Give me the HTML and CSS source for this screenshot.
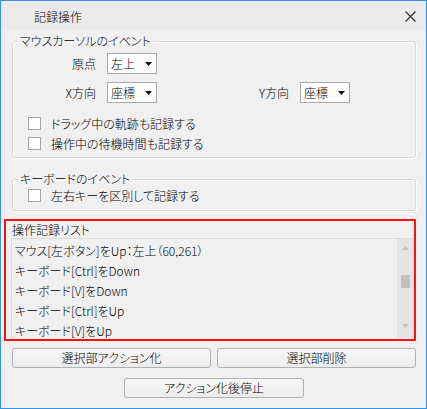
FILE: index.html
```html
<!DOCTYPE html>
<html>
<head>
    <meta charset="UTF-8">
    <title>記録操作</title>
    <link rel="stylesheet" href="styles.css">
</head>
<body>
    <div class="window">
        <div class="titlebar">
            <span class="title">記録操作</span>
            <svg class="close" width="11" height="11" viewBox="0 0 11 11">
                <path d="M0.5 0.5 L10.5 10.5 M10.5 0.5 L0.5 10.5" stroke="#333" stroke-width="1.2" fill="none"/>
            </svg>
        </div>

        <fieldset class="group group-mouse">
            <legend>マウスカーソルのイベント</legend>
            <div class="row row-origin">
                <span class="label">原点</span>
                <div class="combo">
                    <span class="value">左上</span>
                    <svg class="arrow" width="7" height="4" viewBox="0 0 7 4"><polygon points="0,0 7,0 3.5,4" fill="#111"/></svg>
                </div>
            </div>
            <div class="row row-dir">
                <span class="label">X方向</span>
                <div class="combo">
                    <span class="value">座標</span>
                    <svg class="arrow" width="7" height="4" viewBox="0 0 7 4"><polygon points="0,0 7,0 3.5,4" fill="#111"/></svg>
                </div>
                <span class="label label-y">Y方向</span>
                <div class="combo">
                    <span class="value">座標</span>
                    <svg class="arrow" width="7" height="4" viewBox="0 0 7 4"><polygon points="0,0 7,0 3.5,4" fill="#111"/></svg>
                </div>
            </div>
            <div class="check check-first"><span class="box"></span>ドラッグ中の軌跡も記録する</div>
            <div class="check"><span class="box"></span>操作中の待機時間も記録する</div>
        </fieldset>

        <fieldset class="group group-key">
            <legend>キーボードのイベント</legend>
            <div class="check check-key"><span class="box"></span>左右キーを区別して記録する</div>
        </fieldset>

        <div class="record-area">
            <div class="record-label">操作記録リスト</div>
            <div class="listbox">
                <div class="items">
                    <div class="item">マウス[左ボタン]をUp：左上（60,261）</div>
                    <div class="item">キーボード[Ctrl]をDown</div>
                    <div class="item">キーボード[V]をDown</div>
                    <div class="item">キーボード[Ctrl]をUp</div>
                    <div class="item">キーボード[V]をUp</div>
                </div>
                <div class="scrollbar">
                    <svg class="sb-arrow" width="7" height="4" viewBox="0 0 7 4"><polygon points="3.5,0 7,4 0,4" fill="#c2c2c2"/></svg>
                    <div class="thumb"></div>
                    <svg class="sb-arrow sb-down" width="7" height="4" viewBox="0 0 7 4"><polygon points="0,0 7,0 3.5,4" fill="#c2c2c2"/></svg>
                </div>
            </div>
        </div>

        <div class="button-row">
            <button class="btn btn-half">選択部アクション化</button>
            <button class="btn btn-half">選択部削除</button>
        </div>
        <div class="button-row button-row-center">
            <button class="btn btn-stop">アクション化後停止</button>
        </div>
    </div>
</body>
</html>
```

FILE: styles.css
```css
body {
    margin: 0;
    background-color: #f0f0f0;
    font-family: "Noto Sans CJK JP", "Noto Sans", sans-serif;
    font-size: 12px;
    font-weight: 300;
    color: #000;
    font-feature-settings: "palt";
}
.window {
    width: 427px;
    height: 409px;
    box-sizing: border-box;
    border: 1px solid #3592e6;
    background-color: #f0f0f0;
    display: flex;
    flex-direction: column;
}
.titlebar {
    height: 30px;
    background-color: #ebebeb;
    display: flex;
    align-items: center;
    padding-left: 33px;
    flex-shrink: 0;
}
.title {
    font-size: 12px;
    line-height: 16px;
    padding-top: 1px;
}
.close {
    margin-left: auto;
    margin-right: 10px;
}
.group {
    margin: 3px 0 0 11px;
    padding: 0 0 4px 0;
    width: 404px;
    box-sizing: border-box;
    border: 1px solid #d8d8d8;
    border-radius: 3px;
    box-shadow: inset 1px 1px 0 #fff, 1px 1px 0 #fff;
    min-width: 0;
}
.group legend {
    margin-left: 5px;
    padding: 0 2px;
    line-height: 14px;
}
.group-key {
    margin-top: 14px;
    padding-bottom: 6px;
}
.row {
    display: flex;
    align-items: center;
    height: 21px;
    margin-top: 8px;
}
.row-origin {
    margin-top: 5px;
}
.label {
    width: 48px;
    margin-left: 35px;
    text-align: right;
    margin-right: 11px;
}
.label-y {
    margin-left: 84px;
}
.combo {
    width: 50px;
    height: 21px;
    box-sizing: border-box;
    border: 1px solid #a9a9a9;
    background-color: #fbfbfb;
    display: flex;
    align-items: center;
}
.combo .value {
    background-color: #fff;
    padding-left: 3px;
    width: 24px;
    line-height: 19px;
}
.combo .arrow {
    margin-left: 10px;
}
.check {
    display: flex;
    align-items: center;
    height: 20px;
    margin-left: 15px;
}
.check-first {
    margin-top: 10px;
}
.check-key {
    height: 18px;
}
.box {
    width: 13px;
    height: 13px;
    box-sizing: border-box;
    border: 1px solid #a3a3a3;
    background-color: #fff;
    margin-right: 10px;
}
.record-area {
    margin: 8px 0 0 3px;
    width: 412px;
    height: 122px;
    box-sizing: border-box;
    border: 2px solid #ff1010;
}
.record-label {
    padding: 1px 0 0 6px;
    line-height: 16px;
}
.listbox {
    margin-left: 5px;
    width: 403px;
    height: 100px;
    box-sizing: border-box;
    border-top: 1px solid #dcdcdc;
    border-left: 1px solid #dcdcdc;
    display: flex;
    overflow: hidden;
}
.items {
    flex: 1;
    padding: 2px 0 0 3px;
}
.item {
    height: 20px;
    line-height: 20px;
    white-space: nowrap;
}
.scrollbar {
    width: 17px;
    background-color: #e4e4e4;
    display: flex;
    flex-direction: column;
    align-items: center;
}
.sb-arrow {
    margin-top: 7px;
}
.thumb {
    width: 9px;
    height: 13px;
    background-color: #c2c2c2;
    margin-top: 25px;
}
.sb-down {
    margin-top: 36px;
}
.button-row {
    display: flex;
    gap: 6px;
    margin: 7px 0 0 11px;
}
.button-row-center {
    margin: 10px 0 0 123px;
}
.btn {
    height: 20px;
    box-sizing: border-box;
    border: 1px solid #adb2b8;
    border-radius: 3px;
    background: linear-gradient(#f8f8f8, #ececec);
    font-family: "Noto Sans CJK JP", "Noto Sans", sans-serif;
    font-size: 12px;
    font-weight: 300;
    font-feature-settings: "palt";
    color: #000;
    padding: 0;
    line-height: 18px;
}
.btn-half {
    width: 199px;
}
.btn-stop {
    width: 180px;
}
```
